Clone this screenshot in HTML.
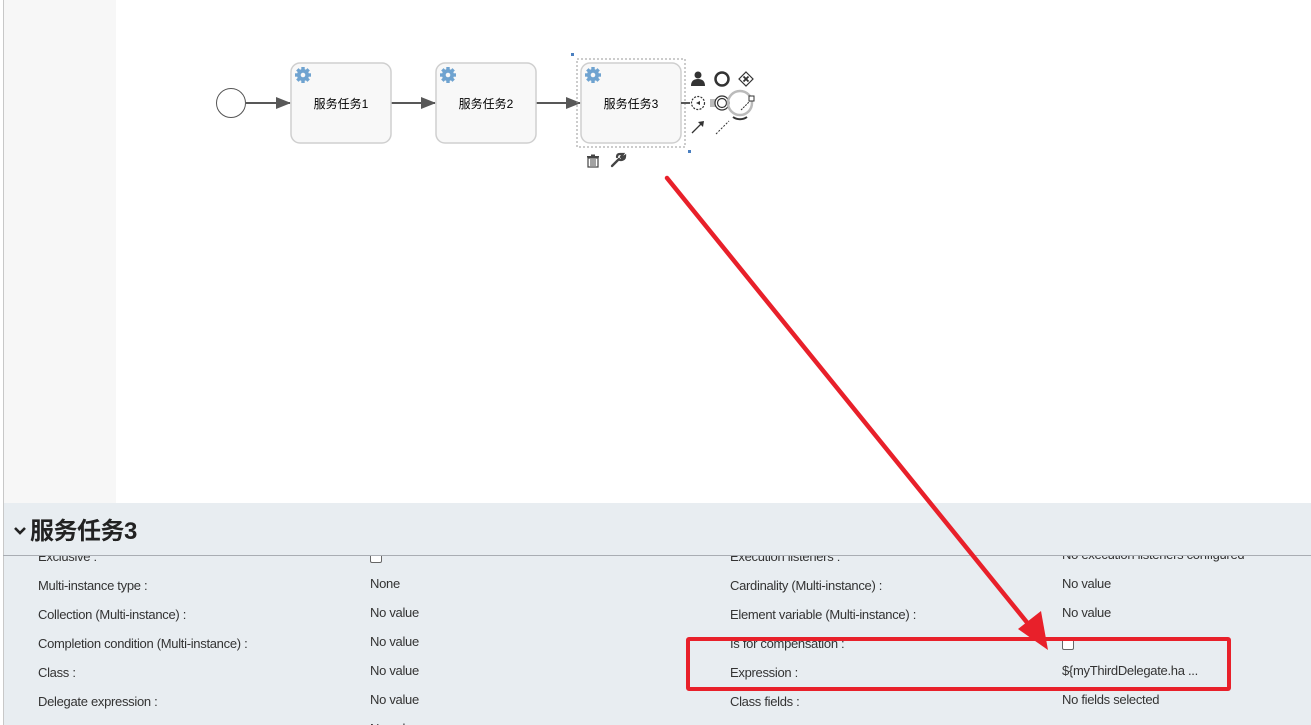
<!DOCTYPE html>
<html><head><meta charset="utf-8"><style>
*{margin:0;padding:0;box-sizing:border-box}
body{width:1311px;height:725px;overflow:hidden;background:#fff;font-family:"Liberation Sans","Noto Sans CJK SC",sans-serif;position:relative}
.strip{position:absolute;left:3px;top:0;width:113px;height:503px;background:#f7f7f7;border-left:1px solid #c8c8c8}
.panel{position:absolute;left:3px;top:503px;width:1308px;height:222px;background:#e8edf1;border-left:1px solid #c8c8c8}
.title{position:absolute;left:30px;top:511px;font-size:24px;font-weight:bold;color:#222;letter-spacing:-0.5px}
.hr{position:absolute;left:3px;top:555px;width:1308px;height:1px;background:#a9adb3}
.clip{position:absolute;left:0;top:556px;width:1311px;height:169px;overflow:hidden}
.r{position:absolute;font-size:13px;color:#333;white-space:nowrap;letter-spacing:-0.3px}
.cb{position:absolute;width:12px;height:12px;border:1px solid #666;border-radius:2px;background:#fff}
</style></head><body>
<div class="strip"></div>
<svg width="1311" height="503" style="position:absolute;left:0;top:0">
<defs>
<g id="gear"><g fill="#6fa3d0"><rect x="-1.7" y="-8" width="3.4" height="16"/><rect x="-1.7" y="-8" width="3.4" height="16" transform="rotate(45)"/><rect x="-1.7" y="-8" width="3.4" height="16" transform="rotate(90)"/><rect x="-1.7" y="-8" width="3.4" height="16" transform="rotate(135)"/><circle r="6"/></g><circle r="2.3" fill="#f8f8f8"/></g></defs>
<circle cx="231" cy="103" r="14.5" fill="#fff" stroke="#555" stroke-width="1"/>
<line x1="246" y1="103" x2="290" y2="103" stroke="#585858" stroke-width="2"/><path d="M276,97 L291,103 L276,109z" fill="#585858"/>
<line x1="391" y1="103" x2="435" y2="103" stroke="#585858" stroke-width="2"/><path d="M421,97 L436,103 L421,109z" fill="#585858"/>
<line x1="536" y1="103" x2="580" y2="103" stroke="#585858" stroke-width="2"/><path d="M566,97 L581,103 L566,109z" fill="#585858"/>
<rect x="291" y="63" width="100" height="80" rx="9" fill="#f8f8f8" stroke="#cfcfcf" stroke-width="1.5"/>
<rect x="436" y="63" width="100" height="80" rx="9" fill="#f8f8f8" stroke="#cfcfcf" stroke-width="1.5"/>
<rect x="581" y="63" width="100" height="80" rx="9" fill="#f8f8f8" stroke="#cfcfcf" stroke-width="1.5"/>
<rect x="577" y="59" width="108" height="88" fill="none" stroke="#999" stroke-width="1" stroke-dasharray="2 2"/>
<rect x="571" y="53" width="3" height="3" fill="#4a7fc0"/><rect x="688" y="150" width="3" height="3" fill="#4a7fc0"/>
<use href="#gear" x="303" y="75"/><use href="#gear" x="448" y="75"/><use href="#gear" x="593" y="75"/>
<g font-size="12" fill="#000" text-anchor="middle" font-family="Liberation Sans,Noto Sans CJK SC,sans-serif">
<text x="341" y="108">服务任务1</text><text x="486" y="108">服务任务2</text><text x="631" y="108">服务任务3</text></g>
<line x1="681" y1="103" x2="690" y2="103" stroke="#585858" stroke-width="2"/>
<circle cx="698" cy="75" r="3.5" fill="#333"/><path d="M691,86 Q691,79 698,79 Q705,79 705,86z" fill="#333"/>
<circle cx="722" cy="79" r="6.5" fill="none" stroke="#333" stroke-width="2.5"/>
<path d="M746,72 L753,79 L746,86 L739,79z" fill="#fff" stroke="#333" stroke-width="1.2"/><path d="M743.5,76.5 L748.5,81.5 M748.5,76.5 L743.5,81.5" stroke="#333" stroke-width="1.8"/>
<circle cx="698" cy="103" r="6.5" fill="#fff" stroke="#333" stroke-width="1.2" stroke-dasharray="2 1.3"/><path d="M696,103 L700,101 L700,105z" fill="#333"/>
<rect x="710" y="99" width="8" height="8" fill="#bbb"/>
<circle cx="722" cy="103" r="7" fill="#fff" stroke="#333" stroke-width="1.2"/><circle cx="722" cy="103" r="4.5" fill="none" stroke="#333" stroke-width="1.2"/>
<circle cx="740" cy="103" r="12" fill="none" stroke="#bbb" stroke-width="2.5"/><path d="M733,117 A12,12 0 0 0 747,117" stroke="#333" stroke-width="2" fill="none"/>
<path d="M741,110 L751,100" stroke="#333" stroke-width="1" stroke-dasharray="2 1"/><rect x="749" y="96" width="5" height="5" fill="#fff" stroke="#333" stroke-width="1"/>
<line x1="692" y1="133" x2="702" y2="123" stroke="#333" stroke-width="1.3"/><path d="M704,121 L703,127 L698,122z" fill="#333"/>
<line x1="716" y1="134" x2="729" y2="121" stroke="#333" stroke-width="1" stroke-dasharray="2 1.5"/>
<g fill="#444"><rect x="587" y="156" width="12" height="1.5"/><rect x="591" y="154.5" width="4" height="1.5"/><rect x="588" y="158" width="10" height="9" fill="none" stroke="#444" stroke-width="1.2"/><rect x="590.5" y="159" width="1" height="7"/><rect x="592.5" y="159" width="1" height="7"/><rect x="594.5" y="159" width="1" height="7"/></g>
<path d="M612,166 L619,159 M617,157 Q617,154 620,154 L623,154 L621,157 L622,158 L625,156 Q625,160 620,160" stroke="#444" stroke-width="2.3" fill="none" stroke-linecap="round"/>
</svg>
<div class="panel"></div>
<svg width="14" height="10" style="position:absolute;left:13px;top:526px"><path d="M2,2 L7,7 L12,2" stroke="#222" stroke-width="2.6" fill="none"/></svg>
<div class="title">服务任务3</div>
<div class="hr"></div>
<div class="clip">
<div class="r" style="left:38px;top:-7px">Exclusive :</div><div class="cb" style="left:370px;top:-5px"></div>
<div class="r" style="left:38px;top:22px">Multi-instance type :</div><div class="r" style="left:370px;top:20px">None</div>
<div class="r" style="left:38px;top:51px">Collection (Multi-instance) :</div><div class="r" style="left:370px;top:49px">No value</div>
<div class="r" style="left:38px;top:80px">Completion condition (Multi-instance) :</div><div class="r" style="left:370px;top:78px">No value</div>
<div class="r" style="left:38px;top:109px">Class :</div><div class="r" style="left:370px;top:107px">No value</div>
<div class="r" style="left:38px;top:138px">Delegate expression :</div><div class="r" style="left:370px;top:136px">No value</div>
<div class="r" style="left:370px;top:165px">No value</div>
<div class="r" style="left:730px;top:-7px">Execution listeners :</div><div class="r" style="left:1062px;top:-9px">No execution listeners configured</div>
<div class="r" style="left:730px;top:22px">Cardinality (Multi-instance) :</div><div class="r" style="left:1062px;top:20px">No value</div>
<div class="r" style="left:730px;top:51px">Element variable (Multi-instance) :</div><div class="r" style="left:1062px;top:49px">No value</div>
<div class="r" style="left:730px;top:80px">Is for compensation :</div><div class="cb" style="left:1062px;top:82px"></div>
<div class="r" style="left:730px;top:109px">Expression :</div><div class="r" style="left:1062px;top:107px">${myThirdDelegate.ha ...</div>
<div class="r" style="left:730px;top:138px">Class fields :</div><div class="r" style="left:1062px;top:136px">No fields selected</div>
</div>
<svg width="1311" height="725" style="position:absolute;left:0;top:0">
<rect x="688" y="639" width="541" height="50" fill="none" stroke="#e8202a" stroke-width="4" rx="1"/>
<line x1="667" y1="178" x2="1038" y2="636" stroke="#e8202a" stroke-width="4.5" stroke-linecap="round"/>
<path d="M1048,650 L1018,629 L1041,611z" fill="#e8202a"/>
</svg>
</body></html>
